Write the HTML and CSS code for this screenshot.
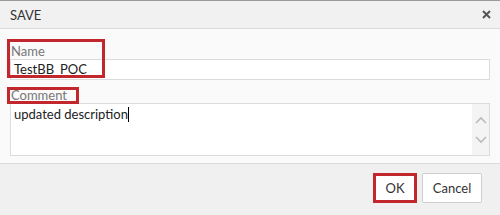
FILE: index.html
```html
<!DOCTYPE html>
<html lang="en">
<head>
  <meta charset="UTF-8" />
  <title>Save</title>
  <link rel="stylesheet" href="styles.css">
</head>
<body>
  <div class="dialog">
    <header class="dlg-head">
      <span class="dlg-title">SAVE</span>
      <button class="dlg-close" aria-label="Close">
        <svg width="9" height="9" viewBox="0 0 9 9"><path d="M1 1L8 8M8 1L1 8" stroke="#555" stroke-width="2"/></svg>
      </button>
    </header>

    <div class="dlg-body">
      <label class="field-label">Name</label>
      <div class="input">TestBB_POC</div>

      <label class="field-label gap">Comment</label>
      <div class="textarea">
        <div class="ta-text">updated description<span class="caret"></span></div>
        <div class="ta-scroll">
          <svg width="12" height="8" viewBox="0 0 12 8"><path d="M1 7L6 2L11 7" fill="none" stroke="#bbb" stroke-width="1.6"/></svg>
          <svg width="12" height="8" viewBox="0 0 12 8"><path d="M1 1L6 6L11 1" fill="none" stroke="#bbb" stroke-width="1.6"/></svg>
        </div>
      </div>

      <span class="mark mark-name"></span>
      <span class="mark mark-comment"></span>
    </div>

    <footer class="dlg-foot">
      <button class="btn btn-ok">OK</button>
      <button class="btn">Cancel</button>
    </footer>
  </div>
</body>
</html>
```

FILE: styles.css
```css
:root {
  --mark: #c1272d;
  --line: #dcdcdc;
}

* {
  margin: 0;
  padding: 0;
  box-sizing: border-box;
}

body {
  font-family: Lato, "Open Sans", sans-serif;
  font-size: 13px;
  color: #333;
  background: #fafafa;
}

.dialog {
  width: 500px;
  height: 215px;
  border-top: 1px solid #9a9a9a;
  display: flex;
  flex-direction: column;
}

.dlg-head {
  height: 28px;
  background: #f1f1f1;
  border-bottom: 1px solid var(--line);
  display: flex;
  align-items: center;
  justify-content: space-between;
  padding: 0 10px;
}

.dlg-title {
  line-height: 16px;
  color: #333;
}

.dlg-close {
  background: none;
  border: none;
  display: flex;
  margin-right: -1px;
}

.dlg-body {
  position: relative;
  height: 134px;
  background: #fafafa;
  padding: 14px 10px 7px;
}

.field-label {
  display: block;
  height: 16px;
  line-height: 16px;
  color: #777;
  padding-left: 1px;
}

.field-label.gap {
  margin-top: 7px;
}

.input {
  height: 21px;
  background: #fff;
  border: 1px solid var(--line);
  padding-left: 3px;
  line-height: 19px;
  color: #222;
}

.textarea {
  height: 53px;
  background: #fff;
  border: 1px solid var(--line);
  display: flex;
}

.ta-text {
  flex: 1;
  padding: 1px 3px;
  line-height: 18px;
  color: #222;
}

.caret {
  display: inline-block;
  width: 1px;
  height: 15px;
  background: #000;
  vertical-align: -3px;
}

.ta-scroll {
  width: 17px;
  background: #f4f4f4;
  display: flex;
  flex-direction: column;
  align-items: center;
  justify-content: center;
  gap: 12px;
}

.mark {
  position: absolute;
  border: 3px solid var(--mark);
}

.mark-name {
  left: 7px;
  top: 10px;
  width: 98px;
  height: 39px;
}

.mark-comment {
  left: 7px;
  top: 58px;
  width: 72px;
  height: 17px;
}

.dlg-foot {
  flex: 1;
  background: #f0f0f0;
  border-top: 1px solid var(--line);
  display: flex;
  justify-content: flex-end;
  align-items: flex-start;
  gap: 5px;
  padding: 9px 18px 0 0;
}

.btn {
  height: 30px;
  width: 60px;
  background: #fff;
  border: 1px solid #cfcfcf;
  border-radius: 2px;
  font-family: inherit;
  font-size: 13px;
  color: #333;
}

.btn-ok {
  width: 44px;
  border: 3px solid var(--mark);
  border-radius: 0;
}
```
